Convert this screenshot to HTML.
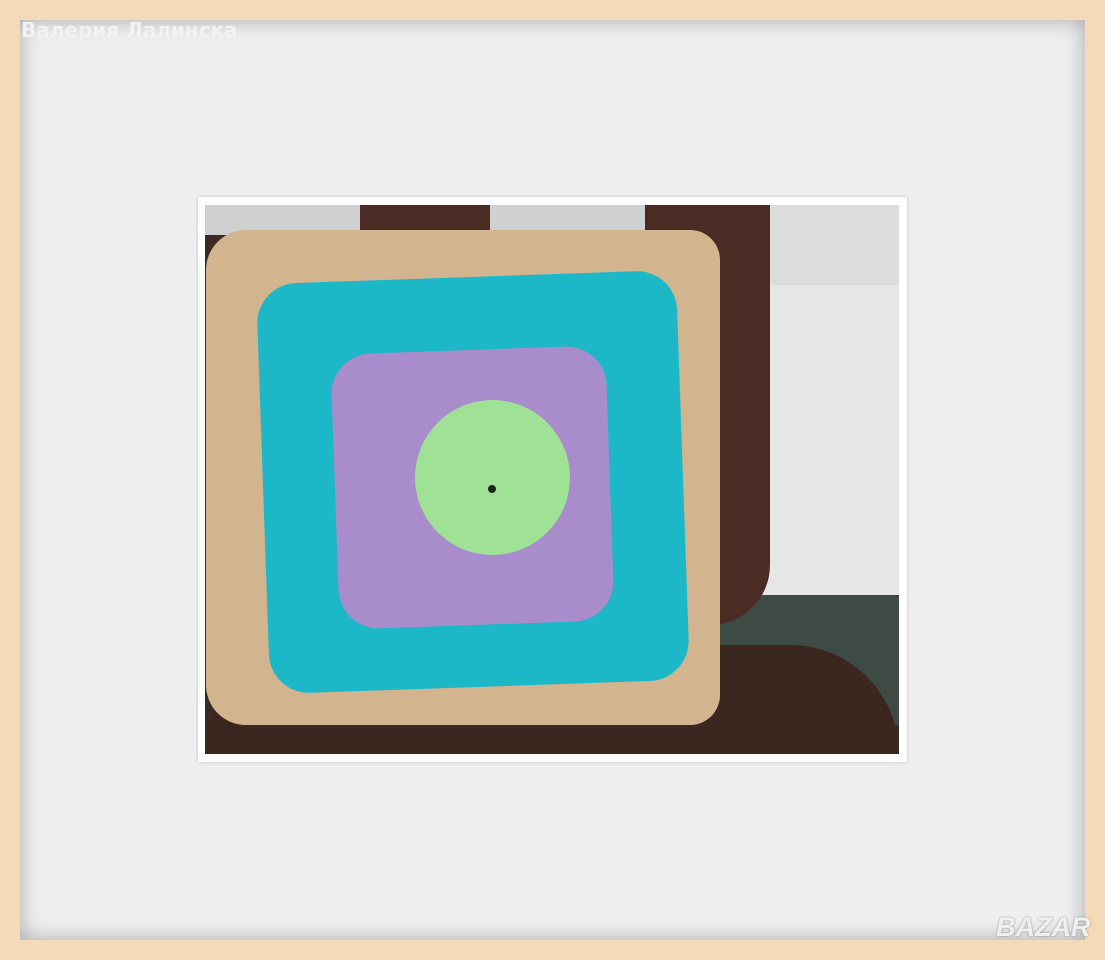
<!DOCTYPE html>
<html><head><meta charset="utf-8"><style>
body{margin:0;width:1105px;height:960px;background:#f4dab6;position:relative;overflow:hidden;font-family:"Liberation Sans","DejaVu Sans",sans-serif}
.mat{position:absolute;left:20px;top:20px;width:1065px;height:920px;background:#efefef;box-shadow:inset 0 0 22px rgba(0,0,0,.3)}
.photo{position:absolute;left:198px;top:197px;width:709px;height:565px;background:#fff;box-shadow:0 0 3px rgba(0,0,0,.2)}
.img{position:absolute;left:7px;top:8px;width:694px;height:549px;overflow:hidden;background:#3a2a24}
.name{position:absolute;left:21px;top:18px;color:#f2f2f2;font-weight:bold;font-size:20px;font-family:"DejaVu Sans",sans-serif}
.logo{position:absolute;left:996px;top:912px;color:rgba(255,255,255,.85);font-weight:bold;font-size:27px;font-style:italic;text-shadow:0 0 2px #888}
</style></head><body>
<div class="mat"></div>
<div class="name">Валерия Лалинска</div>
<div class="photo"><div class="img">
 <div style="position:absolute;left:0;top:0;width:694px;height:30px;background:#cfd0d2"></div>
 <div style="position:absolute;left:515px;top:0;width:179px;height:400px;background:#e6e6e4"></div>
 <div style="position:absolute;left:515px;top:0;width:179px;height:80px;background:#dcdcda"></div>
 <div style="position:absolute;left:500px;top:390px;width:194px;height:130px;background:#3e4a44"></div>
 <div style="position:absolute;left:440px;top:0;width:125px;height:420px;background:#4a2c24;border-radius:0 0 60px 0"></div>
 <div style="position:absolute;left:155px;top:0;width:130px;height:40px;background:#4a2c24"></div>
 <div style="position:absolute;left:0;top:440px;width:694px;height:109px;background:#3b2620;border-radius:200px 200px 0 0"></div>
 <div style="position:absolute;left:0;top:30px;width:30px;height:450px;background:#3a2a22"></div>
 <div style="position:absolute;left:1px;top:25px;width:514px;height:495px;background:#d2b48f;border-radius:40px 30px 30px 40px"></div>
 <div style="position:absolute;left:58px;top:72px;width:420px;height:410px;background:#1cb8c8;transform:rotate(-2deg);border-radius:40px"></div>
 <div style="position:absolute;left:130px;top:145px;width:275px;height:275px;background:#a98ccc;transform:rotate(-2deg);border-radius:40px"></div>
 <div style="position:absolute;left:210px;top:195px;width:155px;height:155px;background:#9fe296;border-radius:50%"></div>
 <div style="position:absolute;left:283px;top:280px;width:8px;height:8px;background:#222;border-radius:50%"></div>
</div></div>
<div class="logo">BAZAR</div>
</body></html>
